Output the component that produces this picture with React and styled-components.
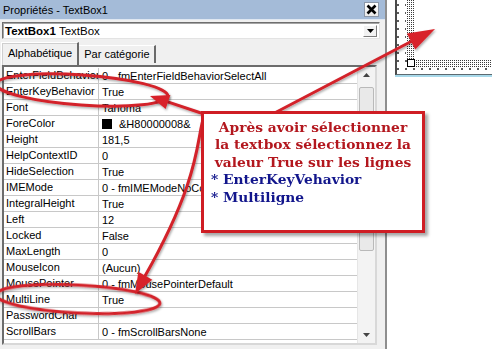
import styled, { createGlobalStyle } from 'styled-components';

const GlobalStyle = createGlobalStyle`
  * { box-sizing: border-box; }
  html, body { margin: 0; padding: 0; background: #fff; }
  body { font-family: "Liberation Sans", Arial, sans-serif; overflow: hidden; }
`;

const rows = [
    { name: 'EnterFieldBehavior', value: '0 - fmEnterFieldBehaviorSelectAll' },
    { name: 'EnterKeyBehavior', value: 'True' },
    { name: 'Font', value: 'Tahoma' },
    { name: 'ForeColor', value: '&H80000008&', swatch: '#000' },
    { name: 'Height', value: '181,5' },
    { name: 'HelpContextID', value: '0' },
    { name: 'HideSelection', value: 'True' },
    { name: 'IMEMode', value: '0 - fmIMEModeNoControl' },
    { name: 'IntegralHeight', value: 'True' },
    { name: 'Left', value: '12' },
    { name: 'Locked', value: 'False' },
    { name: 'MaxLength', value: '0' },
    { name: 'MouseIcon', value: '(Aucun)' },
    { name: 'MousePointer', value: '0 - fmMousePointerDefault' },
    { name: 'MultiLine', value: 'True' },
    { name: 'PasswordChar', value: '' },
    { name: 'ScrollBars', value: '0 - fmScrollBarsNone' },
];

// triangle for an arrow tip, dir = unit vector pointing to the tip
const head = (tip, dir, len, hw) => {
    const bx = tip[0] - dir[0] * len;
    const by = tip[1] - dir[1] * len;
    const px = -dir[1] * hw;
    const py = dir[0] * hw;
    return `${tip[0]},${tip[1]} ${bx + px},${by + py} ${bx - px},${by - py}`;
};

const unit = (x, y) => {
    const l = Math.hypot(x, y);
    return [x / l, y / l];
};

const App = () => {
    const d1 = unit(170, -89);
    const d2 = unit(-54, -18);
    const d3 = unit(-57, 101);

    return (
        <Page>
            <GlobalStyle />
            <PropWindow>
                <TitleBar>
                    <span>Propriétés - TextBox1</span>
                    <CloseButton>
                        <svg width="11" height="11" viewBox="0 0 11 11">
                            <path d="M1.5 1.5 L9.5 9.5 M9.5 1.5 L1.5 9.5" stroke="#000" strokeWidth="2.6" />
                        </svg>
                    </CloseButton>
                </TitleBar>

                <Combo>
                    <span><b>TextBox1</b> TextBox</span>
                    <DropButton>
                        <svg width="7" height="4" viewBox="0 0 7 4">
                            <path d="M0 0 H7 L3.5 4 Z" fill="#000" />
                        </svg>
                    </DropButton>
                </Combo>

                <Tabs>
                    <Tab active>Alphabétique</Tab>
                    <Tab>Par catégorie</Tab>
                </Tabs>

                <Grid>
                    <Rows>
                        {rows.map((r) =>
                            <Row key={r.name}>
                                <NameCell>{r.name}</NameCell>
                                <ValueCell>
                                    {r.swatch && <Swatch color={r.swatch} />}
                                    {r.value}
                                </ValueCell>
                            </Row>
                        )}
                    </Rows>
                    <ScrollBar>
                        <ScrollButton>
                            <svg width="7" height="4" viewBox="0 0 7 4">
                                <path d="M0 4 H7 L3.5 0 Z" fill="#444" />
                            </svg>
                        </ScrollButton>
                        <Thumb />
                        <ScrollButton>
                            <svg width="7" height="4" viewBox="0 0 7 4">
                                <path d="M0 0 H7 L3.5 4 Z" fill="#444" />
                            </svg>
                        </ScrollButton>
                    </ScrollBar>
                </Grid>
            </PropWindow>

            <Designer>
                <FormFrame>
                    <TextBoxOutline>
                        <VBand />
                        <Inner />
                        <Handle />
                        <HBand />
                    </TextBoxOutline>
                </FormFrame>
            </Designer>

            <Notes width="492" height="349" viewBox="0 0 492 349">
                <defs>
                    <filter id="sh" x="-10%" y="-10%" width="130%" height="130%">
                        <feDropShadow dx="1" dy="1.5" stdDeviation="0.8" floodOpacity="0.35" />
                    </filter>
                </defs>
                <g filter="url(#sh)" fill="none" stroke="#d3222a" strokeWidth="3" strokeLinecap="round">
                    <ellipse cx="82" cy="90" rx="86" ry="15" transform="rotate(4 82 90)" />
                    <ellipse cx="78" cy="299" rx="82" ry="14" transform="rotate(3 78 299)" />
                    <path d="M265 118 L412 41" />
                    <path d="M204 114 L167 101.7" />
                    <path d="M204 116 C196 140, 202 175, 145 276" />
                </g>
                <g filter="url(#sh)" fill="#d8232b">
                    <polygon points={head([435, 29], d1, 27, 9)} />
                    <polygon points={head([150, 96], d2, 19, 7.5)} />
                    <polygon points={head([135, 294], d3, 21, 8)} />
                </g>
            </Notes>

            <Callout>
                <Lead>Après avoir sélectionner</Lead>
                <Lead>la textbox sélectionnez la</Lead>
                <Lead>valeur True sur les lignes</Lead>
                <Bullet>* EnterKeyVehavior</Bullet>
                <Bullet>* Multiligne</Bullet>
            </Callout>
        </Page>
    );
};

const Page = styled.div`
    position: relative;
    width: 492px;
    height: 349px;
    display: flex;
    overflow: hidden;
    background: #fff;
`;

const PropWindow = styled.div`
    width: 387px;
    height: 100%;
    display: flex;
    flex-direction: column;
    background: #f0f0f0;
    border-right: 2px solid #8e8e8e;
    font-size: 11px;
    color: #000;
`;

const TitleBar = styled.div`
    height: 20px;
    flex-shrink: 0;
    display: flex;
    align-items: center;
    justify-content: space-between;
    padding: 0 6px 0 3px;
    background: #a4bbd8;
    border-bottom: 1px solid #dfe7f1;
    font-size: 11px;
`;

const CloseButton = styled.div`
    width: 15px;
    height: 15px;
    display: flex;
    align-items: center;
    justify-content: center;
    background: linear-gradient(#fff, #e9e9e9);
    border: 1px solid #8b97a8;
`;

const Combo = styled.div`
    height: 17px;
    margin: 2px 5px 0 2px;
    display: flex;
    align-items: center;
    justify-content: space-between;
    padding: 0 2px 0 2px;
    background: #fff;
    border: 1px solid;
    border-color: #6f6f6f #e3e3e3 #e3e3e3 #6f6f6f;
    box-shadow: inset 1px 1px 0 #a5a5a5;
    font-size: 11.5px;
`;

const DropButton = styled.div`
    width: 14px;
    height: 12px;
    display: flex;
    align-items: center;
    justify-content: center;
    background: #f2f2f2;
    border: 1px solid;
    border-color: #fff #7c7c7c #7c7c7c #fff;
`;

const Tabs = styled.div`
    height: 23px;
    margin-top: 3px;
    padding-left: 1px;
    display: flex;
    align-items: flex-end;
    flex-shrink: 0;
`;

const Tab = styled.div`
    height: ${props => props.active ? '23px' : '18px'};
    margin-bottom: ${props => props.active ? '0' : '2px'};
    padding: ${props => props.active ? '4px 5px 0 6px' : '2px 4px 0 5px'};
    background: #f0f0f0;
    border-top: 1px solid #fff;
    border-left: ${props => props.active ? '1px solid #fff' : 'none'};
    border-right: 2px solid #6a6a6a;
    box-shadow: ${props => props.active ? 'inset 1px 1px 0 #cfcfcf' : 'none'};
    font-size: 11px;
    white-space: nowrap;
`;

const Grid = styled.div`
    flex: 1;
    margin: 0 8px 4px 2px;
    display: flex;
    border: 2px solid;
    border-color: #6c6c6c #d8d8d8 #d8d8d8 #6c6c6c;
    background: #fff;
    overflow: hidden;
`;

const Rows = styled.div`
    flex: 1;
    padding-top: 1px;
    display: flex;
    flex-direction: column;
`;

const Row = styled.div`
    height: 16px;
    flex-shrink: 0;
    display: grid;
    grid-template-columns: 95px 1fr;
    border-bottom: 1px solid #c8c8c8;
    white-space: nowrap;
`;

const NameCell = styled.div`
    padding: 1px 0 0 2px;
    border-right: 1px solid #c8c8c8;
    overflow: hidden;
`;

const ValueCell = styled.div`
    padding: 1px 0 0 3px;
    display: flex;
    align-items: center;
    overflow: hidden;
`;

const Swatch = styled.span`
    width: 10px;
    height: 10px;
    margin: -1px 7px 0 0;
    background: ${props => props.color};
`;

const ScrollBar = styled.div`
    width: 18px;
    display: flex;
    flex-direction: column;
    align-items: center;
    background: #f3f3f3;
    border-left: 1px solid #e6e6e6;
`;

const ScrollButton = styled.div`
    width: 16px;
    height: 16px;
    flex-shrink: 0;
    display: flex;
    align-items: center;
    justify-content: center;
`;

const Thumb = styled.div`
    width: 15px;
    height: 164px;
    margin: 4px 0 auto;
    background: #e9e9e9;
    border: 1px solid #b9b9b9;
    border-radius: 2px;
`;

const Designer = styled.div`
    flex: 1;
    padding-left: 8px;
`;

const FormFrame = styled.div`
    height: 75px;
    padding-left: 9px;
    border-left: 2px solid #4a4a4a;
    border-bottom: 1px solid #5d6a70;
    box-shadow: 0 2px 0 #a8d9ea;
    background-image: radial-gradient(circle, #555 0.7px, transparent 0.9px);
    background-size: 8px 8px;
    background-position: -3px 1px;
`;

const TextBoxOutline = styled.div`
    height: 67px;
    display: grid;
    grid-template-columns: 9px 1fr;
    grid-template-rows: 59px 8px;
`;

const dots = `
    background-color: #fff;
    background-image: repeating-conic-gradient(#3a3a3a 0 25%, transparent 0 100%);
    background-size: 2px 2px;
`;

const VBand = styled.div`
    ${dots}
`;

const Inner = styled.div`
    background: #fff;
`;

const Handle = styled.div`
    width: 8px;
    height: 8px;
    margin-left: 1px;
    background: #fff;
    border: 1px solid #000;
`;

const HBand = styled.div`
    height: 7px;
    margin-top: 1px;
    ${dots}
`;

const Notes = styled.svg`
    position: absolute;
    left: 0;
    top: 0;
    pointer-events: none;
    z-index: 2;
`;

const Callout = styled.div`
    position: absolute;
    left: 201px;
    top: 111px;
    width: 224px;
    height: 122px;
    z-index: 3;
    padding: 5px 3px 0 3px;
    background: #fff;
    border: 3px solid #cf1d24;
    box-shadow: 3px 3px 3px rgba(0, 0, 0, 0.35);
    font-family: "DejaVu Serif", "Liberation Serif", serif;
    font-weight: bold;
    font-size: 13.8px;
    line-height: 17.4px;
    white-space: nowrap;
`;

const Lead = styled.p`
    margin: 0;
    text-align: center;
    color: #b3171e;
`;

const Bullet = styled.p`
    margin: 0;
    padding-left: 4px;
    color: #12168c;
`;

export default App;
